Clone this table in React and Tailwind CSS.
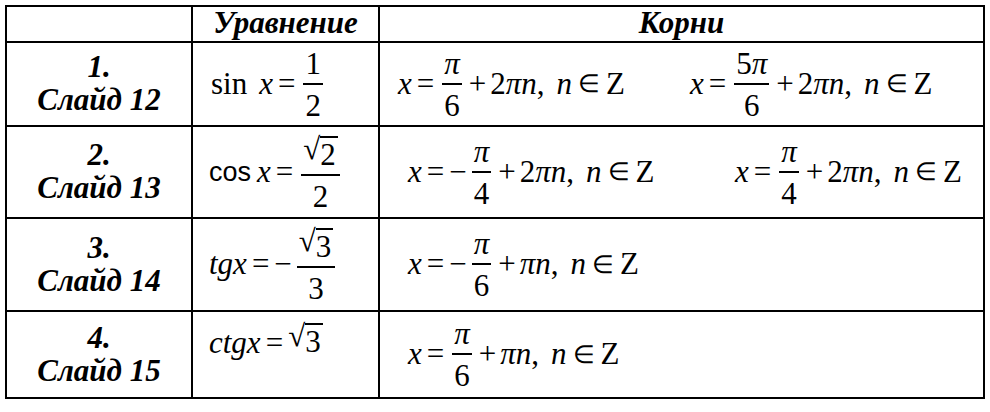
import React from "react";

const I = ({ children, className = "" }) => <span className={"italic " + className}>{children}</span>;

const Frac = ({ num, den }) => (
  <span className="inline-flex flex-col items-center mx-[3px]">
    <span className="leading-none px-[2px] pb-[4px]">{num}</span>
    <span className="h-[2px] bg-black self-stretch" />
    <span className="leading-none px-[2px] pt-[5px]">{den}</span>
  </span>
);

const Sqrt = ({ children }) => (
  <span className="inline-flex items-start leading-none">
    <span className="leading-none">√</span>
    <span className="border-t-2 border-black leading-none mt-[3px] pt-[1px] pr-[2px]">{children}</span>
  </span>
);

const Eq = () => <span className="mx-[5px]">=</span>;
const Plus = () => <span className="mx-[4px]">+</span>;
const Minus = () => <span className="mr-[2px]">−</span>;

const Tail = ({ two = true }) => (
  <>
    <Plus />
    {two && <span>2</span>}
    <I>πn</I>
    <span>,</span>
    <I className="ml-[12px]">n</I>
    <span className="mx-[6px] text-[25px]">∈</span>
    <span>Z</span>
  </>
);

const Label = ({ n, s }) => (
  <div className="bg-white flex flex-col items-center justify-center font-bold italic text-[31px] leading-[33px] pb-[2px]">
    <span>{n}.</span>
    <span>Слайд {s}</span>
  </div>
);

export default function App() {
  return (
    <div className="bg-white w-[990px] h-[412px] pl-[5px] pt-[5px] font-['Liberation_Serif',serif] text-black">
      <div className="grid grid-cols-[184px_185px_603px] grid-rows-[34px_82px_90px_91px_85px] gap-[2px] p-[2px] bg-black w-[980px]">
        <div className="bg-white" />
        <div className="bg-white flex items-center justify-center font-bold italic text-[31px] leading-none pb-[3px]">Уравнение</div>
        <div className="bg-white flex items-center justify-center font-bold italic text-[31px] leading-none pb-[3px]">Корни</div>

        <Label n="1" s="12" />
        <div className="bg-white flex items-center pl-[18px] text-[31px]">
          <span>sin</span>
          <I className="ml-[12px]">x</I>
          <Eq />
          <Frac num="1" den="2" />
        </div>
        <div className="bg-white flex items-center text-[31px]">
          <div className="flex items-center ml-[18px] w-[292px]">
            <I>x</I>
            <Eq />
            <Frac num={<I>π</I>} den="6" />
            <Tail />
          </div>
          <div className="flex items-center">
            <I>x</I>
            <Eq />
            <Frac num={<span>5<I>π</I></span>} den="6" />
            <Tail />
          </div>
        </div>

        <Label n="2" s="13" />
        <div className="bg-white flex items-center pl-[16px] text-[31px]">
          <span className="font-['Liberation_Sans',sans-serif] text-[27px]">cos</span>
          <I className="ml-[6px]">x</I>
          <Eq />
          <Frac num={<Sqrt>2</Sqrt>} den="2" />
        </div>
        <div className="bg-white flex items-center text-[31px]">
          <div className="flex items-center ml-[28px] w-[327px]">
            <I>x</I>
            <Eq />
            <Minus />
            <Frac num={<I>π</I>} den="4" />
            <Tail />
          </div>
          <div className="flex items-center">
            <I>x</I>
            <Eq />
            <Frac num={<I>π</I>} den="4" />
            <Tail />
          </div>
        </div>

        <Label n="3" s="14" />
        <div className="bg-white flex items-center pl-[16px] text-[31px]">
          <I>tgx</I>
          <Eq />
          <Minus />
          <Frac num={<Sqrt>3</Sqrt>} den="3" />
        </div>
        <div className="bg-white flex items-center text-[31px]">
          <div className="flex items-center ml-[28px]">
            <I>x</I>
            <Eq />
            <Minus />
            <Frac num={<I>π</I>} den="6" />
            <Tail two={false} />
          </div>
        </div>

        <Label n="4" s="15" />
        <div className="bg-white flex items-start pl-[16px] pt-[8px] text-[31px]">
          <I>ctgx</I>
          <Eq />
          <Sqrt>3</Sqrt>
        </div>
        <div className="bg-white flex items-center text-[31px]">
          <div className="flex items-center ml-[28px]">
            <I>x</I>
            <Eq />
            <Frac num={<I>π</I>} den="6" />
            <Tail two={false} />
          </div>
        </div>
      </div>
    </div>
  );
}
